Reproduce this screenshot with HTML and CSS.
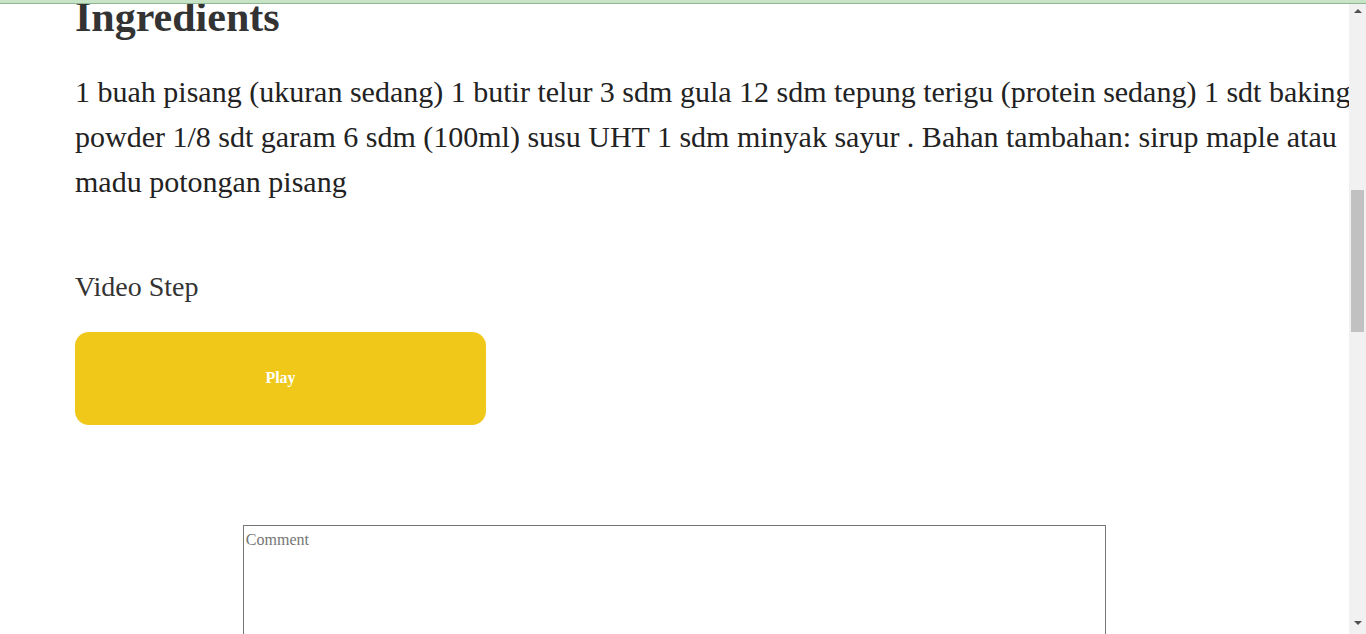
FILE: index.html
```html
<!DOCTYPE html>
<html lang="id">
<head>
<meta charset="utf-8">
<title>Pancake Pisang</title>
<link rel="stylesheet" href="styles.css">
</head>
<body>
<div class="topbar"></div>
<div class="scrollbar" aria-hidden="true">
  <span class="arrow arrow-up"></span>
  <span class="thumb"></span>
  <span class="arrow arrow-down"></span>
</div>
<div class="page">
  <header class="intro">
    <h1 class="recipe-title">Pancake Pisang</h1>
    <p class="recipe-sub">Resep pancake pisang lembut untuk sarapan.</p>
  </header>
  <main class="recipe">
    <h1 class="section-title" id="ingredients">Ingredients</h1>
    <p class="ingredients">1 buah pisang (ukuran sedang) 1 butir telur 3 sdm gula 12 sdm tepung terigu (protein sedang) 1 sdt baking powder 1/8 sdt garam 6 sdm (100ml) susu UHT 1 sdm minyak sayur . Bahan tambahan: sirup maple atau madu potongan pisang</p>
    <h2 class="video-title">Video Step</h2>
    <button class="play-btn" type="button">Play</button>
  </main>
  <section class="comments">
    <textarea class="comment-box" placeholder="Comment"></textarea>
  </section>
</div>
<script src="script.js"></script>
</body>
</html>
```
FILE: styles.css
```css
html {
  overflow-x: hidden;
}
body {
  margin: 0;
  font-family: "Liberation Serif", "Times New Roman", serif;
  background: #fff;
  color: #333;
}
.page {
  width: calc(100% - 17px);
  overflow: hidden;
}
.topbar {
  position: fixed;
  top: 0;
  left: 0;
  right: 0;
  height: 3px;
  background: #c8e4c6;
  border-bottom: 1px solid #8fb592;
  z-index: 10;
}
.scrollbar {
  position: fixed;
  top: 0;
  right: 0;
  bottom: 0;
  width: 17px;
  background: #f1f1f1;
  display: flex;
  flex-direction: column;
  align-items: center;
  z-index: 5;
}
.arrow {
  width: 0;
  height: 0;
  border-left: 4px solid transparent;
  border-right: 4px solid transparent;
}
.arrow-up {
  margin-top: 9px;
  border-bottom: 4px solid #505050;
}
.thumb {
  width: 13px;
  height: 142px;
  margin-top: 177px;
  background: #c1c1c1;
}
.arrow-down {
  margin-top: auto;
  margin-bottom: 9px;
  border-top: 4px solid #505050;
}
.intro {
  height: 766px;
  padding: 60px 75px 0;
  box-sizing: border-box;
}
.recipe-title {
  margin: 0;
  font-size: 42px;
}
.recipe-sub {
  font-size: 20px;
}
.recipe {
  padding-left: 75px;
  margin-right: -30px;
}
.section-title {
  margin: 0 0 28px;
  font-size: 42px;
  font-weight: bold;
  color: #333;
}
.ingredients {
  margin: 0;
  font-size: 30px;
  line-height: 45px;
  color: #222;
}
.video-title {
  margin: 67px 0 29px;
  font-size: 28px;
  font-weight: normal;
  color: #333;
}
.play-btn {
  display: block;
  width: 411px;
  height: 93px;
  padding: 0 0 2px;
  border: 0;
  border-radius: 14px;
  background: #f0c81a;
  color: #fff;
  font-family: "Liberation Serif", "Times New Roman", serif;
  font-size: 16px;
  font-weight: bold;
}
.comments {
  display: flex;
  justify-content: center;
  padding: 100px 0 1100px;
}
.comment-box {
  box-sizing: border-box;
  width: 64%;
  height: 200px;
  margin: 0;
  padding: 5px 2px 2px;
  border: 1px solid #767676;
  font-family: "Liberation Serif", "Times New Roman", serif;
  font-size: 16px;
  resize: vertical;
}
.comment-box::placeholder {
  color: #757575;
}
```
FILE: script.js
```js
window.scrollTo(0, document.getElementById('ingredients').offsetTop + 7);
```
